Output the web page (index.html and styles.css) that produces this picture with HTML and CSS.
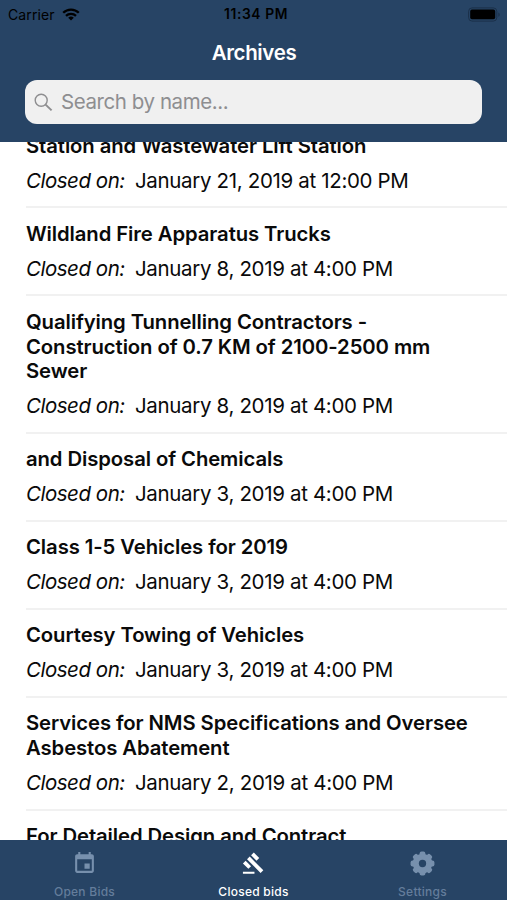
FILE: index.html
```
<!DOCTYPE html>
<html lang="en">
<head>
    <meta charset="utf-8" />
    <meta name="viewport" content="width=device-width, initial-scale=1">
    <title>Archives</title>
    <link rel="stylesheet" href="styles.css">
</head>
<body>
    <header>
        <div class="status">
            <div class="carrier">
                <span>Carrier</span>
                <svg width="18" height="13" viewBox="0 0 18 13" fill="none" stroke="#000" stroke-width="2.3">
                    <path d="M1.2 4.8a11 11 0 0 1 15.6 0" />
                    <path d="M4 7.9a7.1 7.1 0 0 1 10 0" />
                    <path d="M9 12.6L6.2 9.8a4 4 0 0 1 5.6 0z" fill="#000" stroke="none" />
                </svg>
            </div>
            <div class="clock">11:34 PM</div>
            <svg class="battery" width="33" height="15" viewBox="0 0 33 15">
                <rect x=".6" y=".9" width="28.2" height="13.2" rx="3.5" fill="none" stroke="#1b3049" />
                <rect x="2.2" y="2.6" width="25" height="9.6" rx="1.8" />
                <path d="M30.4 5.4c1.7.6 1.7 3.7 0 4.3z" fill="#1b3049" />
            </svg>
        </div>
        <h1>Archives</h1>
        <div class="search">
            <svg width="19" height="19" viewBox="0 0 19 19" fill="none" stroke="#8e8e90">
                <circle cx="7.2" cy="7.2" r="6" stroke-width="1.4" />
                <path d="M11.6 11.6l6 5.8" stroke-width="2" />
            </svg>
            <span>Search by name...</span>
        </div>
    </header>
    <main>
        <ul class="bids">
            <li>
                <h2>Station and Wastewater Lift Station</h2>
                <p><em>Closed on:</em><span class="date">January 21, 2019 at 12:00 PM</span></p>
            </li>
            <li>
                <h2>Wildland Fire Apparatus Trucks</h2>
                <p><em>Closed on:</em><span class="date">January 8, 2019 at 4:00 PM</span></p>
            </li>
            <li>
                <h2>Qualifying Tunnelling Contractors -<br />Construction of 0.7 KM of 2100-2500 mm<br />Sewer</h2>
                <p><em>Closed on:</em><span class="date">January 8, 2019 at 4:00 PM</span></p>
            </li>
            <li>
                <h2>and Disposal of Chemicals</h2>
                <p><em>Closed on:</em><span class="date">January 3, 2019 at 4:00 PM</span></p>
            </li>
            <li>
                <h2>Class 1-5 Vehicles for 2019</h2>
                <p><em>Closed on:</em><span class="date">January 3, 2019 at 4:00 PM</span></p>
            </li>
            <li>
                <h2>Courtesy Towing of Vehicles</h2>
                <p><em>Closed on:</em><span class="date">January 3, 2019 at 4:00 PM</span></p>
            </li>
            <li>
                <h2>Services for NMS Specifications and Oversee<br />Asbestos Abatement</h2>
                <p><em>Closed on:</em><span class="date">January 2, 2019 at 4:00 PM</span></p>
            </li>
            <li>
                <h2>For Detailed Design and Contract</h2>
            </li>
        </ul>
    </main>
    <nav>
        <a class="tab">
            <svg width="25" height="25" viewBox="0 0 24 24" fill="currentColor">
                <path d="M17 12h-5v5h5v-5zM16 1v2H8V1H6v2H5c-1.11 0-1.99.9-1.99 2L3 19c0 1.1.89 2 2 2h14c1.1 0 2-.9 2-2V5c0-1.1-.9-2-2-2h-1V1h-2zm3 18H5V8h14v11z" />
            </svg>
            <span>Open Bids</span>
        </a>
        <a class="tab active">
            <svg width="25" height="25" viewBox="-1 -.6 26 26" fill="currentColor">
                <path d="M1 21h12v2H1zM5.245 8.07l2.83-2.827 14.14 14.142-2.828 2.828zM12.317 1l5.657 5.656-2.83 2.83-5.654-5.66zM3.825 9.485l5.657 5.657-2.828 2.828-5.657-5.657z" />
            </svg>
            <span>Closed bids</span>
        </a>
        <a class="tab">
            <svg width="25" height="25" viewBox="0 0 26 26" fill="currentColor">
                <rect x="10" y=".6" width="6" height="24.8" rx="2" />
                <rect x="10" y=".6" width="6" height="24.8" rx="2" transform="rotate(45 13 13)" />
                <rect x="10" y=".6" width="6" height="24.8" rx="2" transform="rotate(90 13 13)" />
                <rect x="10" y=".6" width="6" height="24.8" rx="2" transform="rotate(135 13 13)" />
                <circle cx="13" cy="13" r="10.2" />
                <circle cx="13" cy="13" r="3.8" fill="#274465" />
            </svg>
            <span>Settings</span>
        </a>
    </nav>
</body>
</html>
```
FILE: styles.css
```
* {box-sizing: border-box;padding: 0;margin: 0;}
body {
    display: flex;
    flex-direction: column;
    height: 900px;
    overflow: hidden;
    background: #fff;
    color: #0a0a0a;
    font-family: Inter, "Liberation Sans", sans-serif;
}
svg {display: block;}

header {height: 142px;flex: none;background: #274465;z-index: 1;}
.status {
    display: grid;
    grid-template-columns: 1fr auto 1fr;
    align-items: center;
    height: 28px;
    padding: 0 6px 0 8px;
    color: #000;
    font-size: 14px;
}
.carrier {display: flex;gap: 7px;align-items: center;letter-spacing: .1px;}
.clock {padding-left: 3px;font-weight: 600;font-size: 13.8px;letter-spacing: .6px;}
.battery {justify-self: end;}
h1 {height: 52px;padding-left: 1px;line-height: 49px;text-align: center;color: #fff;font-size: 20.5px;font-weight: 600;letter-spacing: -.35px;}
.search {
    display: flex;
    align-items: center;
    gap: 8px;
    height: 44px;
    margin: 0 25px;
    padding: 0 9px;
    border-radius: 12px;
    background: #f0f0f0;
    color: #8e8e90;
    font-size: 20.5px;
    letter-spacing: -.43px;
}
.search span {margin-top: -2px;}

main {flex: 1;min-height: 0;overflow: hidden;}
.bids {list-style: none;margin-top: -21.7px;padding-left: 26px;}
.bids li {padding: 13.6px 0 13.1px;border-bottom: 2px solid #f1f1f1;}
.bids h2 {font-size: 20.3px;line-height: 24.6px;font-weight: 600;letter-spacing: -.09px;white-space: nowrap;}
.bids p {display: flex;margin-top: 10.2px;font-size: 20.5px;line-height: 24.6px;letter-spacing: -.34px;white-space: nowrap;}
.bids em {width: 109px;letter-spacing: -.48px;}

nav {display: grid;grid-template-columns: repeat(3, 169px);height: 60px;flex: none;background: #274465;}
.tab {display: flex;flex-direction: column;align-items: center;padding-top: 11px;color: #7790ad;}
.tab span {margin-top: 8px;font-size: 12px;line-height: 16px;font-weight: 500;letter-spacing: .25px;color: #647d9b;}
.active, .active span {color: #fff;}
```
